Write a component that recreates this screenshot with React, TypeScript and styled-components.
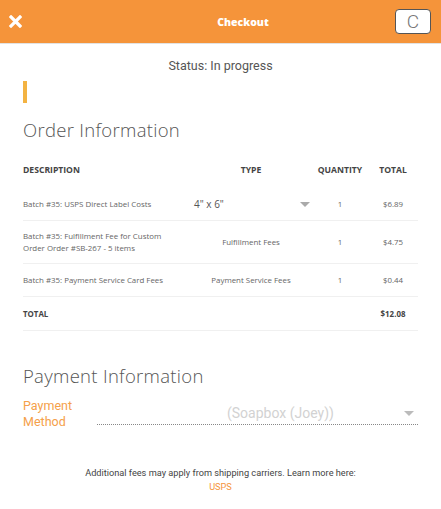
import styled, { createGlobalStyle } from 'styled-components'

const GlobalStyle = createGlobalStyle`
  body {
    margin: 0;
    background: #fff;
    font-family: Roboto, "Liberation Sans", sans-serif;
  }
`

const Page = styled.div`
  width: 441px;
  min-height: 509px;
  background: #fff;
`

const Header = styled.header`
  height: 43px;
  background: #f5943a;
  border-bottom: 1px solid #e2e2e2;
  display: flex;
  align-items: center;
  padding: 0 10px 0 8px;
`

const CloseButton = styled.button`
  width: 14px;
  height: 14px;
  padding: 0;
  border: 0;
  background: none;
  display: flex;
  align-items: center;
  justify-content: center;
`

const HeaderTitle = styled.h1`
  flex: 1;
  margin: 0;
  text-align: center;
  color: #fff;
  font-family: "Open Sans", sans-serif;
  font-weight: 800;
  font-size: 10.5px;
  padding-left: 69px;
`

const RefreshButton = styled.button`
  width: 36px;
  height: 25px;
  background: #fff;
  border: 1px solid #555;
  border-radius: 4px;
  display: flex;
  align-items: center;
  justify-content: center;
  padding: 0;
  color: #777;
  font-family: Roboto, sans-serif;
  font-weight: 300;
  font-size: 19px;
`

const Body = styled.main`
  padding: 0 23px;
`

const Status = styled.p`
  margin: 14px 0 0;
  text-align: center;
  font-size: 12.5px;
  color: #555;
`

const Progress = styled.div`
  width: 4px;
  height: 22px;
  margin-top: 8px;
  background: #f3b342;
`

const SectionTitle = styled.h2<{ $top: number }>`
  margin: ${(p) => p.$top}px 0 0;
  font-family: "Open Sans", sans-serif;
  font-weight: 300;
  font-size: 18.5px;
  color: #555;
  letter-spacing: 0.3px;
`

const Table = styled.div`
  margin-top: 10px;
  font-family: "Open Sans", sans-serif;
`

const Row = styled.div<{ $head?: boolean; $pad?: string }>`
  display: grid;
  grid-template-columns: 167px 1fr 56px 50px;
  align-items: center;
  padding: ${(p) => p.$pad ?? '11px 0'};
  border-bottom: ${(p) => (p.$head ? 'none' : '1px solid #f0f0f0')};
  font-size: ${(p) => (p.$head ? '8.6px' : '7.9px')};
  font-weight: ${(p) => (p.$head ? 700 : 400)};
  color: ${(p) => (p.$head ? '#444' : '#666')};
  line-height: 12px;
`

const Cell = styled.div<{ $align?: string; $bold?: boolean }>`
  text-align: ${(p) => p.$align ?? 'left'};
  font-weight: ${(p) => (p.$bold ? 700 : 'inherit')};
  color: ${(p) => (p.$bold ? '#444' : 'inherit')};
`

const DescCell = styled(Cell)`
  padding-right: 12px;
`

const TypeSelect = styled.div`
  display: flex;
  align-items: center;
  justify-content: space-between;
  padding: 0 2px 0 4px;
  font-size: 10px;
  color: #555;
`

const Arrow = styled.span<{ $size: number; $color: string }>`
  width: 0;
  height: 0;
  border-left: ${(p) => p.$size}px solid transparent;
  border-right: ${(p) => p.$size}px solid transparent;
  border-top: ${(p) => p.$size}px solid ${(p) => p.$color};
`

const PaymentRow = styled.div`
  display: flex;
  align-items: flex-end;
  margin-top: 10px;
`

const PaymentLabel = styled.label`
  width: 74px;
  color: #f5a04a;
  font-size: 12.5px;
  line-height: 16px;
`

const PaymentSelect = styled.div`
  flex: 1;
  display: flex;
  align-items: center;
  justify-content: space-between;
  border-bottom: 1px dotted #888;
  padding: 0 4px 3px 130px;
  margin-bottom: 5px;
  font-size: 14px;
  color: #d2d2d2;
`

const Footer = styled.footer`
  margin-top: 36px;
  text-align: center;
  font-size: 9.2px;
  line-height: 14px;
  color: #444;
`

const Link = styled.a`
  color: #f5943a;
  text-decoration: none;
  display: block;
`

const rows = [
  { desc: 'Batch #35: Fulfillment Fee for Custom Order Order #SB-267 - 5 items', type: 'Fulfillment Fees', qty: '1', total: '$4.75', pad: '9px 0' },
  { desc: 'Batch #35: Payment Service Card Fees', type: 'Payment Service Fees', qty: '1', total: '$0.44', pad: '10px 0' },
]

export default function App() {
  return (
    <Page>
      <GlobalStyle />
      <Header>
        <CloseButton aria-label="Close">
          <svg width="13" height="13" viewBox="0 0 13 13">
            <path d="M2 2 L11 11 M11 2 L2 11" stroke="#fff" strokeWidth="3.2" strokeLinecap="square" />
          </svg>
        </CloseButton>
        <HeaderTitle>Checkout</HeaderTitle>
        <RefreshButton>C</RefreshButton>
      </Header>
      <Body>
        <Status>Status: In progress</Status>
        <Progress />
        <SectionTitle $top={14}>Order Information</SectionTitle>
        <Table>
          <Row $head $pad="12px 0">
            <Cell>DESCRIPTION</Cell>
            <Cell $align="center">TYPE</Cell>
            <Cell $align="center">QUANTITY</Cell>
            <Cell $align="center">TOTAL</Cell>
          </Row>
          <Row $pad="10px 0">
            <DescCell>Batch #35: USPS Direct Label Costs</DescCell>
            <TypeSelect>
              4" x 6"
              <Arrow $size={5} $color="#aaa" />
            </TypeSelect>
            <Cell $align="center">1</Cell>
            <Cell $align="center">$6.89</Cell>
          </Row>
          {rows.map((r) => (
            <Row key={r.desc} $pad={r.pad}>
              <DescCell>{r.desc}</DescCell>
              <Cell $align="center">{r.type}</Cell>
              <Cell $align="center">{r.qty}</Cell>
              <Cell $align="center">{r.total}</Cell>
            </Row>
          ))}
          <Row $pad="11px 0 10px">
            <Cell $bold>TOTAL</Cell>
            <Cell />
            <Cell />
            <Cell $align="center" $bold>
              $12.08
            </Cell>
          </Row>
        </Table>
        <SectionTitle $top={32}>Payment Information</SectionTitle>
        <PaymentRow>
          <PaymentLabel>
            Payment
            <br />
            Method
          </PaymentLabel>
          <PaymentSelect>
            (Soapbox (Joey))
            <Arrow $size={5} $color="#bbb" />
          </PaymentSelect>
        </PaymentRow>
        <Footer>
          Additional fees may apply from shipping carriers. Learn more here:
          <Link href="#">USPS</Link>
        </Footer>
      </Body>
    </Page>
  )
}
